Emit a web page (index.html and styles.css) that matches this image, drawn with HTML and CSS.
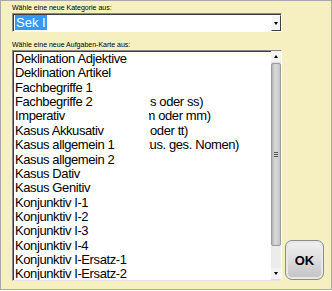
FILE: index.html
```html
<!DOCTYPE html>
<html lang="de">
<head>
    <meta charset="UTF-8">
    <title>Karte wählen</title>
    <link rel="stylesheet" href="styles.css">
</head>
<body>

    <div class="dialog">
        <div class="field-label">Wähle eine neue Kategorie aus:</div>
        <div class="combo">
            <div class="combo-text"><span class="selected">Sek I</span></div>
            <div class="combo-btn"><span class="tri-down"></span></div>
        </div>

        <div class="field-label second">Wähle eine neue Aufgaben-Karte aus:</div>
        <div class="bottom-row">
            <div class="listbox">
                <ul class="items">
                    <li>Deklination Adjektive</li>
                    <li>Deklination Artikel</li>
                    <li>Fachbegriffe 1</li>
                    <li><span class="name">Fachbegriffe 2</span><span class="ghost"><span class="g1">s oder ss)</span></span></li>
                    <li><span class="name">Imperativ</span><span class="ghost"><span class="g2">m oder mm)</span></span></li>
                    <li><span class="name">Kasus Akkusativ</span><span class="ghost"><span class="g3">oder tt)</span></span></li>
                    <li><span class="name">Kasus allgemein 1</span><span class="ghost"><span class="g4">zus. ges. Nomen)</span></span></li>
                    <li>Kasus allgemein 2</li>
                    <li>Kasus Dativ</li>
                    <li>Kasus Genitiv</li>
                    <li>Konjunktiv I-1</li>
                    <li>Konjunktiv I-2</li>
                    <li>Konjunktiv I-3</li>
                    <li>Konjunktiv I-4</li>
                    <li>Konjunktiv I-Ersatz-1</li>
                    <li>Konjunktiv I-Ersatz-2</li>
                </ul>
                <div class="scrollbar">
                    <div class="sb-btn"><span class="tri-up"></span></div>
                    <div class="sb-thumb"><span class="grip"></span></div>
                    <div class="sb-track"></div>
                    <div class="sb-btn"><span class="tri-down"></span></div>
                </div>
            </div>
            <button class="ok-btn">OK</button>
        </div>
    </div>

</body>
</html>
```

FILE: styles.css
```css
body {
    margin: 0;
    background-color: #ffffff;
    font-family: "Liberation Sans", Arial, sans-serif;
}
.dialog {
    width: 332px;
    height: 290px;
    box-sizing: border-box;
    border: 1px solid #a8a8a8;
    background-color: #f6efc0;
    padding: 2px 0 0 11px;
}
.field-label {
    font-size: 7px;
    line-height: 9px;
    color: #000;
}
.field-label.second {
    margin-top: 8px;
}
.combo {
    margin-top: 1px;
    width: 270px;
    height: 19px;
    box-sizing: border-box;
    display: flex;
    background-color: #fff;
    border: 1px solid;
    border-color: #8a8a8a #ffffff #ffffff #8a8a8a;
    box-shadow: inset 1px 1px 0 #3c3c3c;
}
.combo-text {
    flex: 1;
    padding: 2px 0 0 2px;
    font-size: 13px;
    line-height: 14px;
}
.selected {
    background-color: #3399ff;
    color: #fff;
    padding: 0 1px;
}
.combo-btn {
    width: 10px;
    margin: 1px 0 0 0;
    height: 16px;
    box-sizing: border-box;
    background-color: #f4f4f4;
    border: 1px solid;
    border-color: #ffffff #404040 #404040 #ffffff;
    display: flex;
    align-items: center;
    justify-content: center;
}
.tri-down {
    width: 0;
    height: 0;
    border-left: 2.5px solid transparent;
    border-right: 2.5px solid transparent;
    border-top: 3px solid #000;
}
.tri-up {
    width: 0;
    height: 0;
    border-left: 2.5px solid transparent;
    border-right: 2.5px solid transparent;
    border-bottom: 3px solid #000;
}
.bottom-row {
    margin-top: 1px;
    display: flex;
    align-items: flex-end;
}
.listbox {
    width: 270px;
    height: 231px;
    box-sizing: border-box;
    display: flex;
    background-color: #fff;
    border: 1px solid;
    border-color: #8a8a8a #ffffff #e6e6e6 #8a8a8a;
    box-shadow: inset 1px 1px 0 #3c3c3c;
}
.items {
    flex: 1;
    list-style: none;
    margin: 0;
    padding: 1px 0 0 2px;
    overflow: hidden;
    font-size: 13px;
    letter-spacing: -0.4px;
    line-height: 14.36px;
    color: #000;
}
.items li {
    display: grid;
    grid-template-columns: 134px 1fr;
    height: 14.36px;
    white-space: nowrap;
}
.items li .ghost {
    overflow: hidden;
}
.g1 { margin-left: 1px; }
.g2 { margin-left: -4.5px; }
.g3 { margin-left: 1px; }
.g4 { margin-left: -5.5px; }
.scrollbar {
    width: 10px;
    display: flex;
    flex-direction: column;
    background-color: #ececec;
}
.sb-btn {
    height: 11px;
    display: flex;
    align-items: center;
    justify-content: center;
    background-color: #f2f2f2;
    border-bottom: 1px solid #e0e0e0;
}
.sb-thumb {
    height: 183px;
    box-sizing: border-box;
    border: 1px solid #9a9a9a;
    border-radius: 2px;
    background: linear-gradient(to right, #b4b4b4, #dadada 40%, #c4c4c4);
    display: flex;
    align-items: center;
    justify-content: center;
}
.grip {
    width: 4px;
    height: 5px;
    background: repeating-linear-gradient(to bottom, #555 0, #555 1px, transparent 1px, transparent 2px);
}
.sb-track {
    flex: 1;
}
.ok-btn {
    margin: 0 0 1px 3px;
    width: 39px;
    height: 40px;
    box-sizing: border-box;
    border: 1px solid #8c8c8c;
    border-radius: 7px;
    background: linear-gradient(to bottom, #f2f2f2, #dcdcdc 50%, #c2c2c2);
    box-shadow: inset 0 0 0 2px #e8e8e8;
    font-family: "Liberation Sans", Arial, sans-serif;
    font-size: 13px;
    font-weight: bold;
    color: #000;
    padding: 0;
}
```
